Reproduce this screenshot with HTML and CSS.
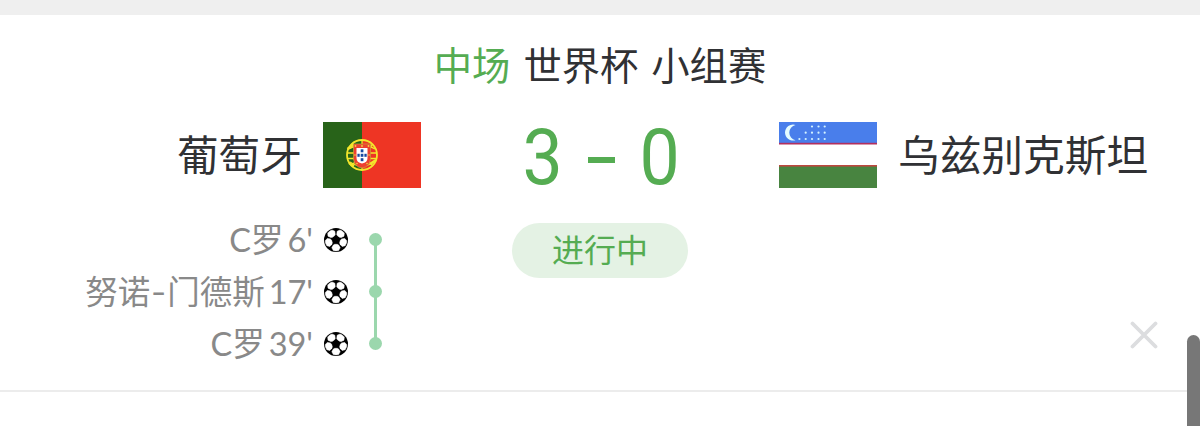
FILE: index.html
```html
<!DOCTYPE html>
<html lang="zh-CN">
<head>
<meta charset="utf-8">
<title>世界杯 小组赛</title>
<link rel="stylesheet" href="styles.css">
</head>
<body>
<svg width="0" height="0" class="defs">
  <defs>
    <path id="panel" d="M9.400 1.500Q12 .7 14.600 1.500L16.200 4.200 14.700 6.900 13.300 7.700H10.700L9.300 6.900 7.800 4.200Z" stroke="#fff" stroke-width=".5" stroke-linejoin="round"/>
    <symbol id="ball" viewBox="0 0 24 24">
      <circle cx="12" cy="12" r="12" fill="#000"/>
      <g fill="#fff">
        <use href="#panel" transform="rotate(36 12 12)"/>
        <use href="#panel" transform="rotate(108 12 12)"/>
        <use href="#panel" transform="rotate(180 12 12)"/>
        <use href="#panel" transform="rotate(252 12 12)"/>
        <use href="#panel" transform="rotate(324 12 12)"/>
      </g>
    </symbol>
  </defs>
</svg>
<main class="page">
  <div class="top-band"></div>
  <section class="match">
    <h1 class="title"><span class="stage">中场</span><span>世界杯</span><span>小组赛</span></h1>
    <div class="board">
      <div class="team home">
        <span class="name">葡萄牙</span>
        <svg class="flag" viewBox="0 0 98 66">
          <rect width="98" height="66" fill="#ee3524"/>
          <rect width="39" height="66" fill="#286319"/>
          <g fill="none" stroke="#f3e62c">
            <circle cx="39" cy="33" r="15" stroke-width="1.800"/>
            <path stroke-width="1.300" d="M24.500 31H53M25 36.500H53M39 18V48M28 22 50 44M28 44 50 22M26 27Q39 19 52 27M27 40Q39 48 51 40"/>
          </g>
          <path d="M24.500 27 31 22M47 42 53 38M26 41 31 44" stroke="#f3e62c" stroke-width="2.400"/>
          <path d="M30.500 22H47.500V37Q46.500 45 39 46 31.500 45 30.500 37Z" fill="#ed4030" stroke="#c9a53a" stroke-width=".7"/>
          <path d="M33.500 26H44.500V36Q44.500 40.500 39 41.500 33.500 40.500 33.500 36Z" fill="#fff"/>
          <g fill="#17489f"><rect x="37.700" y="27.300" width="2.700" height="3"/><rect x="37.700" y="31.800" width="2.700" height="3"/><rect x="37.700" y="36.200" width="2.700" height="3"/><rect x="34.400" y="31.800" width="2.300" height="3"/><rect x="41.400" y="31.800" width="2.300" height="3"/></g>
          <g fill="#f0d53c"><circle cx="32.500" cy="24" r=".9"/><circle cx="39" cy="24" r=".9"/><circle cx="45.500" cy="24" r=".9"/><circle cx="32" cy="33" r=".8"/><circle cx="46" cy="33" r=".8"/><circle cx="34" cy="41.500" r=".8"/><circle cx="44" cy="41.500" r=".8"/></g>
        </svg>
      </div>
      <div class="score"><span>3</span><i class="dash"></i><span>0</span></div>
      <div class="team away">
        <svg class="flag" viewBox="0 0 98 66">
          <rect width="98" height="66" fill="#fff"/>
          <rect width="98" height="21.500" fill="#497eeb"/>
          <rect y="20.800" width="98" height="1.700" fill="#b2305f"/>
          <rect y="43" width="98" height="2" fill="#bd4840"/>
          <rect y="44.600" width="98" height="21.400" fill="#488440"/>
          <path d="M16.500 3A8 8 0 1 0 16.500 18.200 7.750 7.750 0 0 1 16.500 3Z" fill="#e4fbff"/>
          <g fill="#d4f3ff"><circle cx="33" cy="4.500" r="1.100"/><circle cx="39.500" cy="4.500" r="1.100"/><circle cx="45.700" cy="4.500" r="1.100"/><circle cx="26.700" cy="10.700" r="1.100"/><circle cx="33" cy="10.700" r="1.100"/><circle cx="39.500" cy="10.700" r="1.100"/><circle cx="45.700" cy="10.700" r="1.100"/><circle cx="20.400" cy="17" r="1.100"/><circle cx="26.700" cy="17" r="1.100"/><circle cx="33" cy="17" r="1.100"/><circle cx="39.500" cy="17" r="1.100"/><circle cx="45.700" cy="17" r="1.100"/></g>
        </svg>
        <span class="name">乌兹别克斯坦</span>
      </div>
    </div>
    <div class="details">
      <ul class="events">
        <li class="event"><span class="player">C罗</span><span class="minute">6'</span><svg class="ball"><use href="#ball"/></svg><i class="dot"></i></li>
        <li class="event"><span class="player">努诺<i class="hyphen">-</i>门德斯</span><span class="minute">17'</span><svg class="ball"><use href="#ball"/></svg><i class="dot"></i></li>
        <li class="event"><span class="player">C罗</span><span class="minute">39'</span><svg class="ball"><use href="#ball"/></svg><i class="dot"></i></li>
      </ul>
      <div class="status">进行中</div>
      <svg class="close" viewBox="0 0 28 28"><path d="M2.500 2.500 25.500 25.500M25.500 2.500 2.500 25.500" fill="none" stroke="#dcdddf" stroke-width="3.800" stroke-linecap="round"/></svg>
    </div>
  </section>
  <div class="scrollbar"></div>
</main>
</body>
</html>
```
FILE: styles.css
```css
* { box-sizing: border-box; }
body {
  margin: 0;
  background: #fff;
  color: #303134;
  font-family: "Noto Sans CJK SC", sans-serif;
}
.defs { position: absolute; }
.page { position: relative; height: 426px; overflow: hidden; }
.top-band { height: 15px; background: #efefef; }
.match { height: 377px; border-bottom: 2px solid #ececec; }
.title {
  display: flex;
  justify-content: center;
  gap: 13px;
  margin: 0;
  padding-top: 29px;
  font-size: 38.300px;
  font-weight: 400;
  line-height: 40px;
}
.stage { color: #55ac52; }
.board {
  display: grid;
  grid-template-columns: 421px 358px 421px;
  grid-template-rows: 66px;
  height: 66px;
  margin-top: 38px;
}
.team { display: flex; align-items: center; gap: 21px; }
.home { justify-content: flex-end; }
.name { font-size: 41.700px; line-height: 62px; padding-bottom: 4px; white-space: nowrap; }
.flag { display: block; flex: none; width: 98px; height: 66px; }
.score {
  display: flex;
  align-items: center;
  justify-content: center;
  gap: 24px;
  height: 72px;
  padding-left: 2px;
  color: #55ac52;
  font: 400 77px/72px Roboto, sans-serif;
}
.score span { transform: scaleX(.93); margin: 0 -1px; }
.dash { width: 27px; height: 6px; margin-top: 4px; background: currentColor; }
.details {
  display: grid;
  grid-template-columns: 382px 436px 340px;
  padding-top: 26px;
}
.events { margin: 0; padding: 0; list-style: none; }
.event {
  position: relative;
  display: flex;
  align-items: center;
  justify-content: flex-end;
  height: 52px;
  color: #898989;
  font-size: 32.500px;
  line-height: 52px;
}
.player { font-family: Lato, "Noto Sans CJK SC", sans-serif; }
.hyphen {
  display: inline-block;
  width: 17px;
  font-style: normal;
  text-align: center;
  transform: scaleX(1.300);
}
.minute { margin-left: 4px; font-family: Lato, sans-serif; }
.ball { width: 24px; height: 24px; margin-left: 11px; }
.dot {
  width: 13px;
  height: 13px;
  margin-left: 21px;
  margin-bottom: 2px;
  border-radius: 50%;
  background: #9bd7ad;
}
.event:not(:last-child)::after {
  content: "";
  position: absolute;
  right: 5px;
  top: 26px;
  width: 3px;
  height: 52px;
  background: #9bd7ad;
}
.status {
  justify-self: center;
  width: 176px;
  height: 55px;
  margin-top: 9px;
  border-radius: 28px;
  background: #e4f2e4;
  color: #55ac52;
  font-size: 32px;
  line-height: 50px;
  text-align: center;
}
.close { justify-self: end; width: 28px; height: 28px; margin-top: 107px; }
.scrollbar {
  position: absolute;
  right: 0;
  top: 335px;
  width: 13px;
  height: 110px;
  border-radius: 7px;
  background: #777;
}
```
